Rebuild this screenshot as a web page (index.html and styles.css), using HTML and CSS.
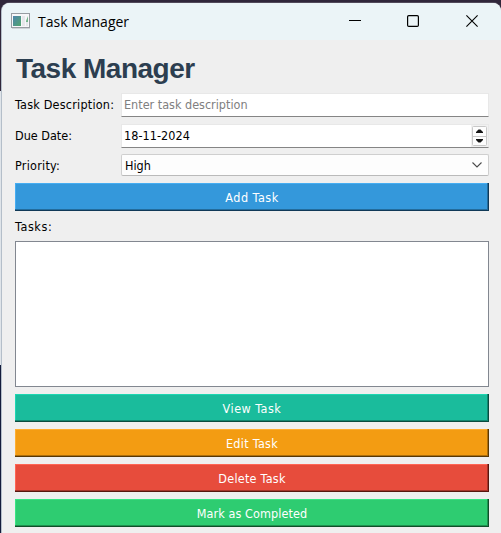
FILE: index.html
```html
<!DOCTYPE html>
<html lang="en">
<head>
<meta charset="utf-8">
<title>Task Manager</title>
<link rel="stylesheet" href="styles.css">
</head>
<body>
<div class="desktop">
<main class="window">
  <header class="titlebar">
    <svg class="app-icon" width="19" height="16" viewBox="0 0 19 16">
      <defs><linearGradient id="g" x1="0" y1="0" x2="1" y2="1"><stop offset="0" stop-color="#4e84ad"/><stop offset="1" stop-color="#51a66d"/></linearGradient></defs>
      <rect x=".5" y=".5" width="18" height="14" fill="#f7f7f9" stroke="#979ca2"/>
      <rect x="1" y="15" width="18" height="1" fill="#cfd4d7"/>
      <rect x="2" y="3" width="8" height="10" fill="url(#g)"/>
      <rect x="11" y="3" width="3" height="10" fill="#e6e7ea"/>
      <path d="M15 8L17 3V9H15z" fill="#73b58b"/>
      <rect x="15" y="9" width="2" height="4" fill="#e4e8eb"/>
    </svg>
    <span class="caption">Task Manager</span>
    <div class="controls">
      <svg width="12" height="12" viewBox="0 0 12 12"><path d="M0 5.5H12" stroke="#000"/></svg>
      <svg width="12" height="12" viewBox="0 0 12 12"><rect x=".6" y=".6" width="10.8" height="10.8" rx="1.2" fill="none" stroke="#000" stroke-width="1.2"/></svg>
      <svg class="close" width="12" height="12" viewBox="0 0 12 12"><path d="M.4 .4L11.6 11.6M11.6 .4L.4 11.6" stroke="#000" stroke-width="1.1"/></svg>
    </div>
  </header>
  <section class="content">
    <h1><span>Task Manager</span></h1>
    <div class="form">
      <label class="l-desc">Task Description:</label>
      <div class="field"><span class="hint">Enter task description</span></div>
      <label class="l-date">Due Date:</label>
      <div class="field date"><span class="value">18-11-2024</span>
        <div class="spin">
          <svg width="15" height="20" viewBox="0 0 15 20"><rect x=".5" y=".5" width="14" height="19" rx="1" fill="#fdfdfd" stroke="#c8c8c8"/><path d="M1 10.5H14" stroke="#c8c8c8"/><path d="M4 7V6L6.5 3.5H8.5L11 6V7zM4 13H11V14L8.5 16.5H6.5L4 14z" fill="#151515"/></svg>
        </div>
      </div>
      <label class="l-priority">Priority:</label>
      <div class="combo"><span>High</span><svg width="10" height="6" viewBox="0 0 10 6"><path d="M.5 .5L5 5L9.5 .5" fill="none" stroke="#4c4c4c" stroke-width="1.1"/></svg></div>
    </div>
    <button class="btn add"><span>Add Task</span></button>
    <div class="tasks-label">Tasks:</div>
    <div class="list"></div>
    <div class="actions">
      <button class="btn view"><span>View Task</span></button>
      <button class="btn edit"><span>Edit Task</span></button>
      <button class="btn delete"><span>Delete Task</span></button>
      <button class="btn done"><span>Mark as Completed</span></button>
    </div>
  </section>
</main>
</div>
</body>
</html>
```
FILE: styles.css
```css
* { box-sizing: border-box; }
body { margin: 0; overflow: hidden; font: 12.5px/14px "DejaVu Sans Condensed", "DejaVu Sans", sans-serif; font-stretch: condensed; color: #000; }
.desktop { width: 501px; height: 533px; padding: 3px 0 0 2px; background: linear-gradient(#30263a 0 91px, #dfe4e9 91px 365px, #141c3b 365px); }
.window { height: 530px; background: #efefef; border-radius: 8px 8px 0 0; overflow: hidden; box-shadow: -1px 0 #b4bec9, 0 -1px #51495a; }
.titlebar { height: 37px; background: #ebf4f7; display: flex; align-items: center; padding: 0 23px 0 9px; }
.app-icon { margin-top: -1px; }
.caption { font: 14px/20px "Open Sans", sans-serif; margin-left: 8px; white-space: nowrap; }
.controls { margin-left: auto; display: flex; gap: 46px; margin-top: -1px; }
.controls svg { display: block; }
.controls .close { margin-left: 1px; }
.content { padding: 0 12px 0 13px; }
h1 { margin: 0; height: 53px; padding: 12px 0 0 1px; font: bold 28px/34px "Liberation Sans", sans-serif; letter-spacing: -.5px; color: #2c3e50; }
.form { display: grid; grid-template-columns: 100px 368px; grid-template-rows: 24px 24px 22px; column-gap: 6px; row-gap: 7px; align-items: center; white-space: nowrap; }
.l-desc { letter-spacing: .22px; }
.l-date { letter-spacing: 0; }
.l-priority { letter-spacing: .25px; }
.value { letter-spacing: .05px; }
.field { height: 24px; background: #fff; border: 1px solid #e8e8e8; border-bottom-color: #858585; display: flex; align-items: center; padding-left: 2px; }
.hint { color: #808080; letter-spacing: 0; }
.date { padding-right: 0; }
.spin { margin-left: auto; width: 17px; height: 22px; background: #f1f1f1; padding: 1px; }
.spin svg { display: block; }
.combo { height: 22px; margin-top: -2px; background: #fdfdfd; border: 1px solid #cfcfcf; border-bottom-color: #bababa; border-radius: 2px; display: flex; align-items: center; justify-content: space-between; padding: 0 6px 0 3px; }
.combo span { padding-top: 2px; }
.btn { display: block; width: 474px; height: 28px; margin: 0; padding: 1px 0 0; border: 0; color: #fff; font: inherit; text-align: center; background: var(--face); box-shadow: inset -1px -1px var(--dark), inset -2px -2px var(--shade), inset 1px 1px var(--light); letter-spacing: .5px; }
.add { margin-top: 6px; --face: #3498db; --dark: #103957; --shade: #236c9c; --light: #45adf2; }
.view { --face: #1abc9c; --dark: #0a4b3e; --shade: #128670; --light: #1dd7b2; }
.edit { --face: #f39c12; --dark: #573805; --shade: #ad6f0d; --light: #ffae2f; letter-spacing: .3px; }
.delete { --face: #e74c3c; --dark: #56170f; --shade: #a5352a; --light: #ff6554; letter-spacing: .25px; }
.done { --face: #2ecc71; --dark: #0f4f29; --shade: #209150; --light: #39e583; letter-spacing: .08px; }
.tasks-label { height: 30px; padding-top: 9px; letter-spacing: .6px; }
.list { height: 146px; background: #fff; border: 1px solid #828790; }
.actions { display: grid; gap: 7px; margin-top: 7px; }
```
